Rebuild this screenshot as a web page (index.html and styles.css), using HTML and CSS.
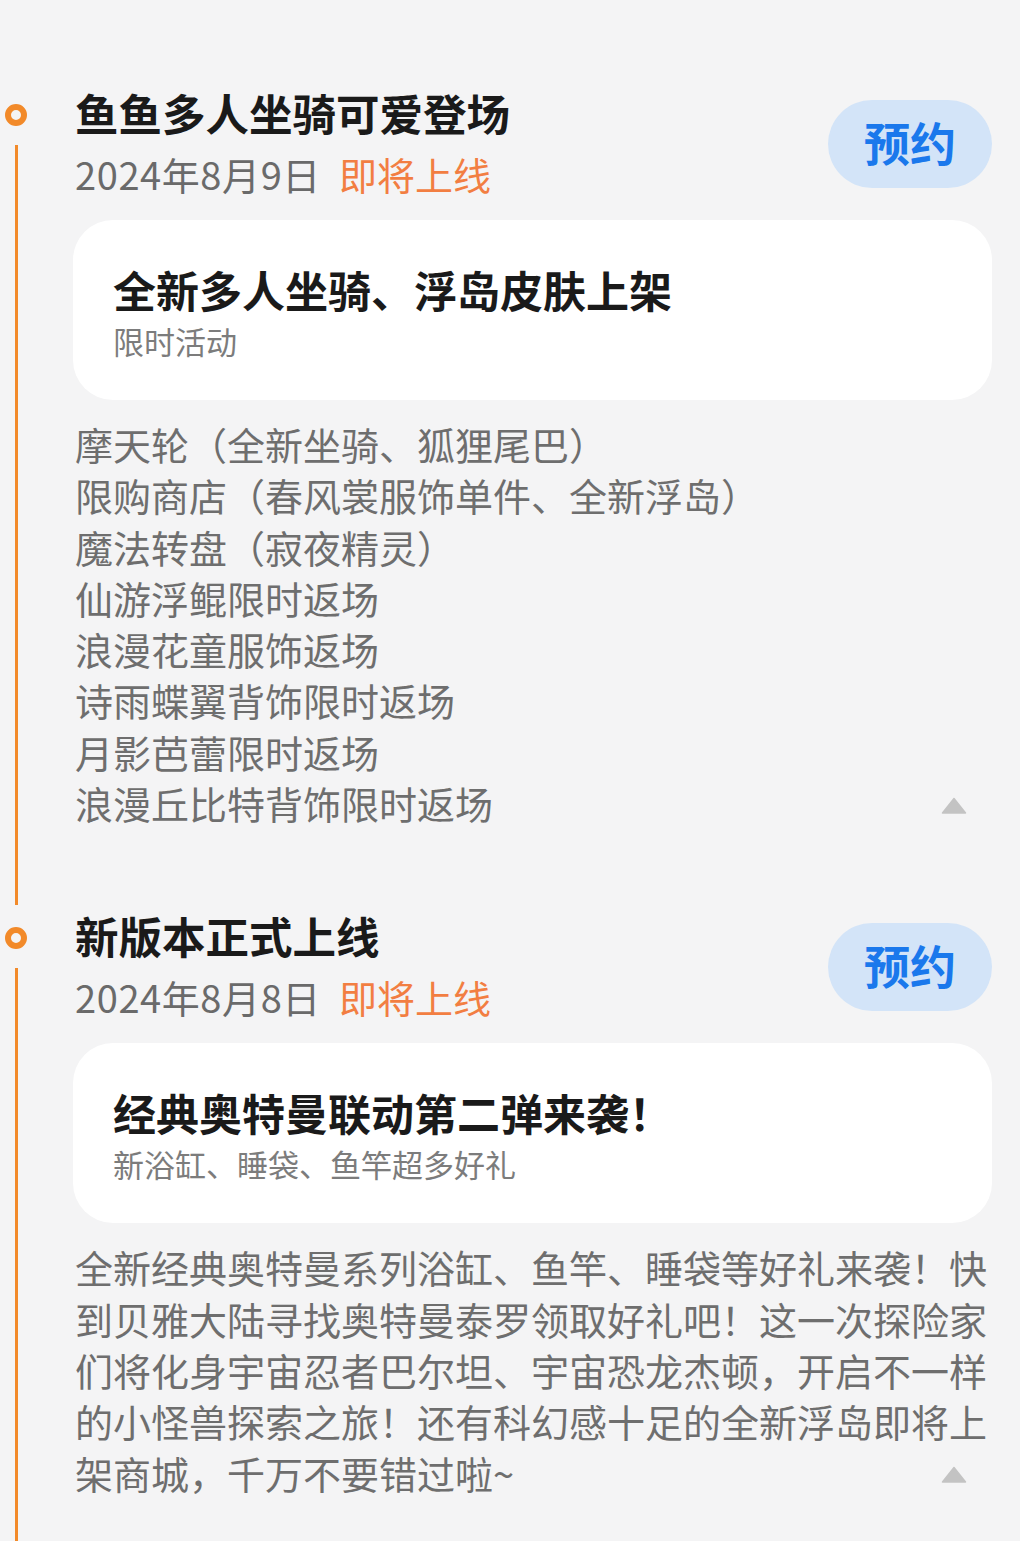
FILE: index.html
```html
<!DOCTYPE html>
<html lang="zh-CN">
<head>
<meta charset="utf-8">
<title>活动日历</title>
<link rel="stylesheet" href="styles.css">
</head>
<body>
<main class="timeline">
  <section class="event">
    <div class="rail"><span class="dot"></span><span class="line"></span></div>
    <div class="body">
      <header class="head">
        <div class="head-text">
          <h2 class="title">鱼鱼多人坐骑可爱登场</h2>
          <div class="meta"><span class="date">2024年8月9日</span><span class="status">即将上线</span></div>
        </div>
        <button class="reserve">预约</button>
      </header>
      <div class="card">
        <div class="card-title">全新多人坐骑、浮岛皮肤上架</div>
        <div class="card-sub">限时活动</div>
      </div>
      <div class="detail">
        <div>摩天轮（全新坐骑、狐狸尾巴）</div>
        <div>限购商店（春风裳服饰单件、全新浮岛）</div>
        <div>魔法转盘（寂夜精灵）</div>
        <div>仙游浮鲲限时返场</div>
        <div>浪漫花童服饰返场</div>
        <div>诗雨蝶翼背饰限时返场</div>
        <div>月影芭蕾限时返场</div>
        <div>浪漫丘比特背饰限时返场<span class="fold"><svg width="26" height="17" viewBox="0 0 26 17"><path d="M13 1.5 L24.5 16 L1.5 16 Z" fill="#c3c3c3" stroke="#c3c3c3" stroke-width="1.5" stroke-linejoin="round"/></svg></span></div>
      </div>
    </div>
  </section>
  <section class="event">
    <div class="rail"><span class="dot"></span><span class="line"></span></div>
    <div class="body">
      <header class="head">
        <div class="head-text">
          <h2 class="title">新版本正式上线</h2>
          <div class="meta"><span class="date">2024年8月8日</span><span class="status">即将上线</span></div>
        </div>
        <button class="reserve">预约</button>
      </header>
      <div class="card">
        <div class="card-title">经典奥特曼联动第二弹来袭！</div>
        <div class="card-sub">新浴缸、睡袋、鱼竿超多好礼</div>
      </div>
      <div class="detail para">全新经典奥特曼系列浴缸、鱼竿、睡袋等好礼来袭！快到贝雅大陆寻找奥特曼泰罗领取好礼吧！这一次探险家们将化身宇宙忍者巴尔坦、宇宙恐龙杰顿，开启不一样的小怪兽探索之旅！还有科幻感十足的全新浮岛即将上架商城，千万不要错过啦~<span class="fold"><svg width="26" height="17" viewBox="0 0 26 17"><path d="M13 1.5 L24.5 16 L1.5 16 Z" fill="#c3c3c3" stroke="#c3c3c3" stroke-width="1.5" stroke-linejoin="round"/></svg></span></div>
    </div>
  </section>
</main>
</body>
</html>
```

FILE: styles.css
```css
* { box-sizing: border-box; }
html, body { margin: 0; padding: 0; }
body {
  background: #f4f4f5;
  font-family: "Noto Sans CJK SC", "Noto Sans", sans-serif;
  min-height: 1541px;
}
.timeline {
  padding-top: 85px;
  display: flex;
  flex-direction: column;
  min-height: 1541px;
}
.event {
  display: grid;
  grid-template-columns: 32px 1fr;
  column-gap: 41px;
}
.event:last-child { flex: 1; }
.rail {
  display: flex;
  flex-direction: column;
  align-items: center;
}
.dot {
  width: 22px;
  height: 22px;
  margin-top: 19px;
  border-radius: 50%;
  border: 6px solid #f28a2a;
  flex: none;
}
.line {
  flex: 1;
  width: 3px;
  margin-top: 19px;
  margin-bottom: 3px;
  background: #f28a2a;
}
.event:last-child .line { margin-bottom: 0; }
.body {
  padding-right: 28px;
  padding-bottom: 80px;
}
.head {
  display: flex;
  align-items: flex-start;
  justify-content: space-between;
}
.title {
  margin: 0;
  font-size: 43.5px;
  line-height: 56px;
  font-weight: 700;
  color: #1a1a1a;
  padding-left: 2px;
}
.meta {
  font-size: 38px;
  line-height: 50px;
  padding-left: 2px;
  margin-top: 8px;
}
.date { color: #6a6a6a; letter-spacing: 0.6px; }
.status { color: #f27e42; margin-left: 18px; }
.reserve {
  width: 164px;
  height: 88px;
  border: none;
  border-radius: 44px;
  background: #d3e4f8;
  color: #1a78ec;
  font-family: inherit;
  font-size: 46px;
  line-height: 1;
  font-weight: 700;
  padding: 0 0 6px;
  margin-top: 15px;
}
.card {
  margin-top: 21px;
  background: #ffffff;
  border-radius: 40px;
  padding: 42px 40px 38px;
}
.card-title {
  font-size: 43px;
  line-height: 54px;
  font-weight: 700;
  color: #1a1a1a;
}
.card-sub {
  font-size: 31px;
  line-height: 42px;
  color: #7c7c7c;
  margin-top: 4px;
}
.detail {
  margin-top: 18px;
  font-size: 38px;
  line-height: 51.3px;
  color: #6e6e6e;
  padding-left: 2px;
}
.fold {
  float: right;
  height: 51px;
  padding-top: 5px;
  display: flex;
  align-items: center;
  margin-right: 25px;
}
.fold svg { display: block; }
```
